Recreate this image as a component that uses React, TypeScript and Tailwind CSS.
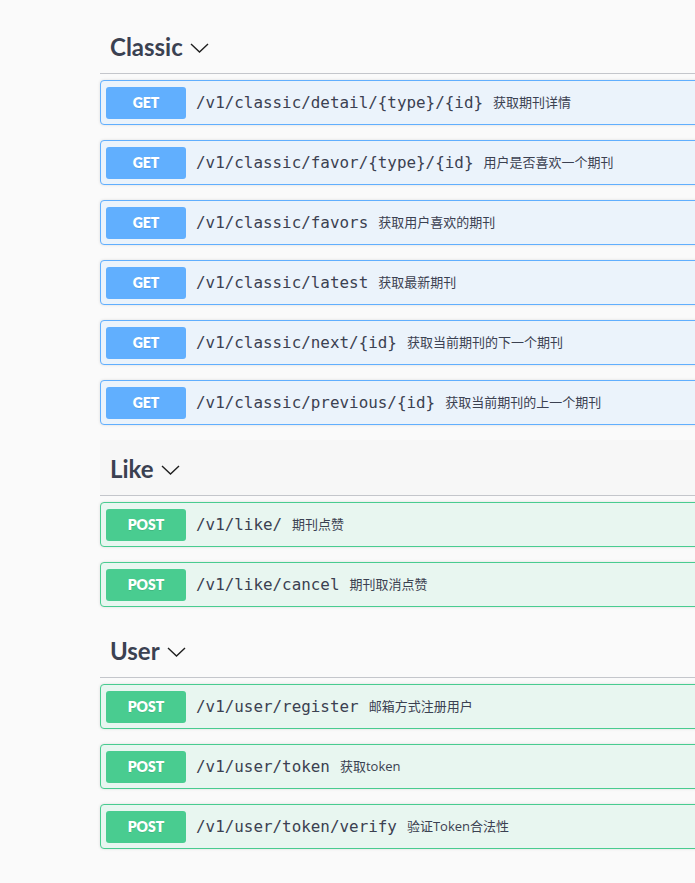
import React from "react";

type Op = { method: "GET" | "POST"; path: string; desc: string };

const sections: { name: string; hover?: boolean; ops: Op[] }[] = [
  {
    name: "Classic",
    ops: [
      { method: "GET", path: "/v1/classic/detail/{type}/{id}", desc: "获取期刊详情" },
      { method: "GET", path: "/v1/classic/favor/{type}/{id}", desc: "用户是否喜欢一个期刊" },
      { method: "GET", path: "/v1/classic/favors", desc: "获取用户喜欢的期刊" },
      { method: "GET", path: "/v1/classic/latest", desc: "获取最新期刊" },
      { method: "GET", path: "/v1/classic/next/{id}", desc: "获取当前期刊的下一个期刊" },
      { method: "GET", path: "/v1/classic/previous/{id}", desc: "获取当前期刊的上一个期刊" },
    ],
  },
  {
    name: "Like",
    hover: true,
    ops: [
      { method: "POST", path: "/v1/like/", desc: "期刊点赞" },
      { method: "POST", path: "/v1/like/cancel", desc: "期刊取消点赞" },
    ],
  },
  {
    name: "User",
    ops: [
      { method: "POST", path: "/v1/user/register", desc: "邮箱方式注册用户" },
      { method: "POST", path: "/v1/user/token", desc: "获取token" },
      { method: "POST", path: "/v1/user/token/verify", desc: "验证Token合法性" },
    ],
  },
];

function Chevron() {
  return (
    <svg width="19" height="10" viewBox="0 0 19 10" className="ml-[7px] mt-[2px]">
      <polyline points="1,1 9.5,9 18,1" fill="none" stroke="#1f1f1f" strokeWidth="1.4" />
    </svg>
  );
}

function OpBlock({ op }: { op: Op }) {
  const isGet = op.method === "GET";
  return (
    <div
      className={
        "mb-[15px] flex h-[45px] items-center rounded-[4px] border px-[5px] shadow-[0_0_3px_rgba(0,0,0,0.12)] " +
        (isGet ? "border-[#61affe] bg-[#ebf3fb]" : "border-[#49cc90] bg-[#e8f6f0]")
      }
    >
      <div
        className={
          "flex h-[32px] w-[80px] shrink-0 items-center justify-center rounded-[3px] text-[14px] font-extrabold text-white [text-shadow:0_1px_0_rgba(0,0,0,0.1)] " +
          (isGet ? "bg-[#61affe]" : "bg-[#49cc90]")
        }
        style={{ fontFamily: "Lato, 'Open Sans', sans-serif" }}
      >
        {op.method}
      </div>
      <span
        className="px-[10px] text-[15.9px] font-normal text-[#3b4151]"
        style={{ fontFamily: "'DejaVu Sans Mono', 'Liberation Mono', monospace" }}
      >
        {op.path}
      </span>
      <span
        className="text-[13px] text-[#3b4151]"
        style={{ fontFamily: "'Open Sans', 'Noto Sans CJK SC', sans-serif" }}
      >
        {op.desc}
      </span>
    </div>
  );
}

export default function App() {
  return (
    <div className="min-h-[883px] w-full overflow-hidden bg-[#fafafa]">
      <div className="ml-[100px] w-[1100px] pt-[18px]">
        {sections.map((s) => (
          <div key={s.name}>
            <div
              className={
                "mb-[6px] flex h-[56px] items-center border-b border-[#c4c6cb] pl-[10px] pt-[2px] " +
                (s.hover ? "bg-[#f7f7f7]" : "")
              }
            >
              <span
                className="text-[24px] font-bold text-[#3b4151]"
                style={{ fontFamily: "Lato, 'Open Sans', sans-serif" }}
              >
                {s.name}
              </span>
              <Chevron />
            </div>
            {s.ops.map((op) => (
              <OpBlock key={op.path} op={op} />
            ))}
          </div>
        ))}
      </div>
    </div>
  );
}
